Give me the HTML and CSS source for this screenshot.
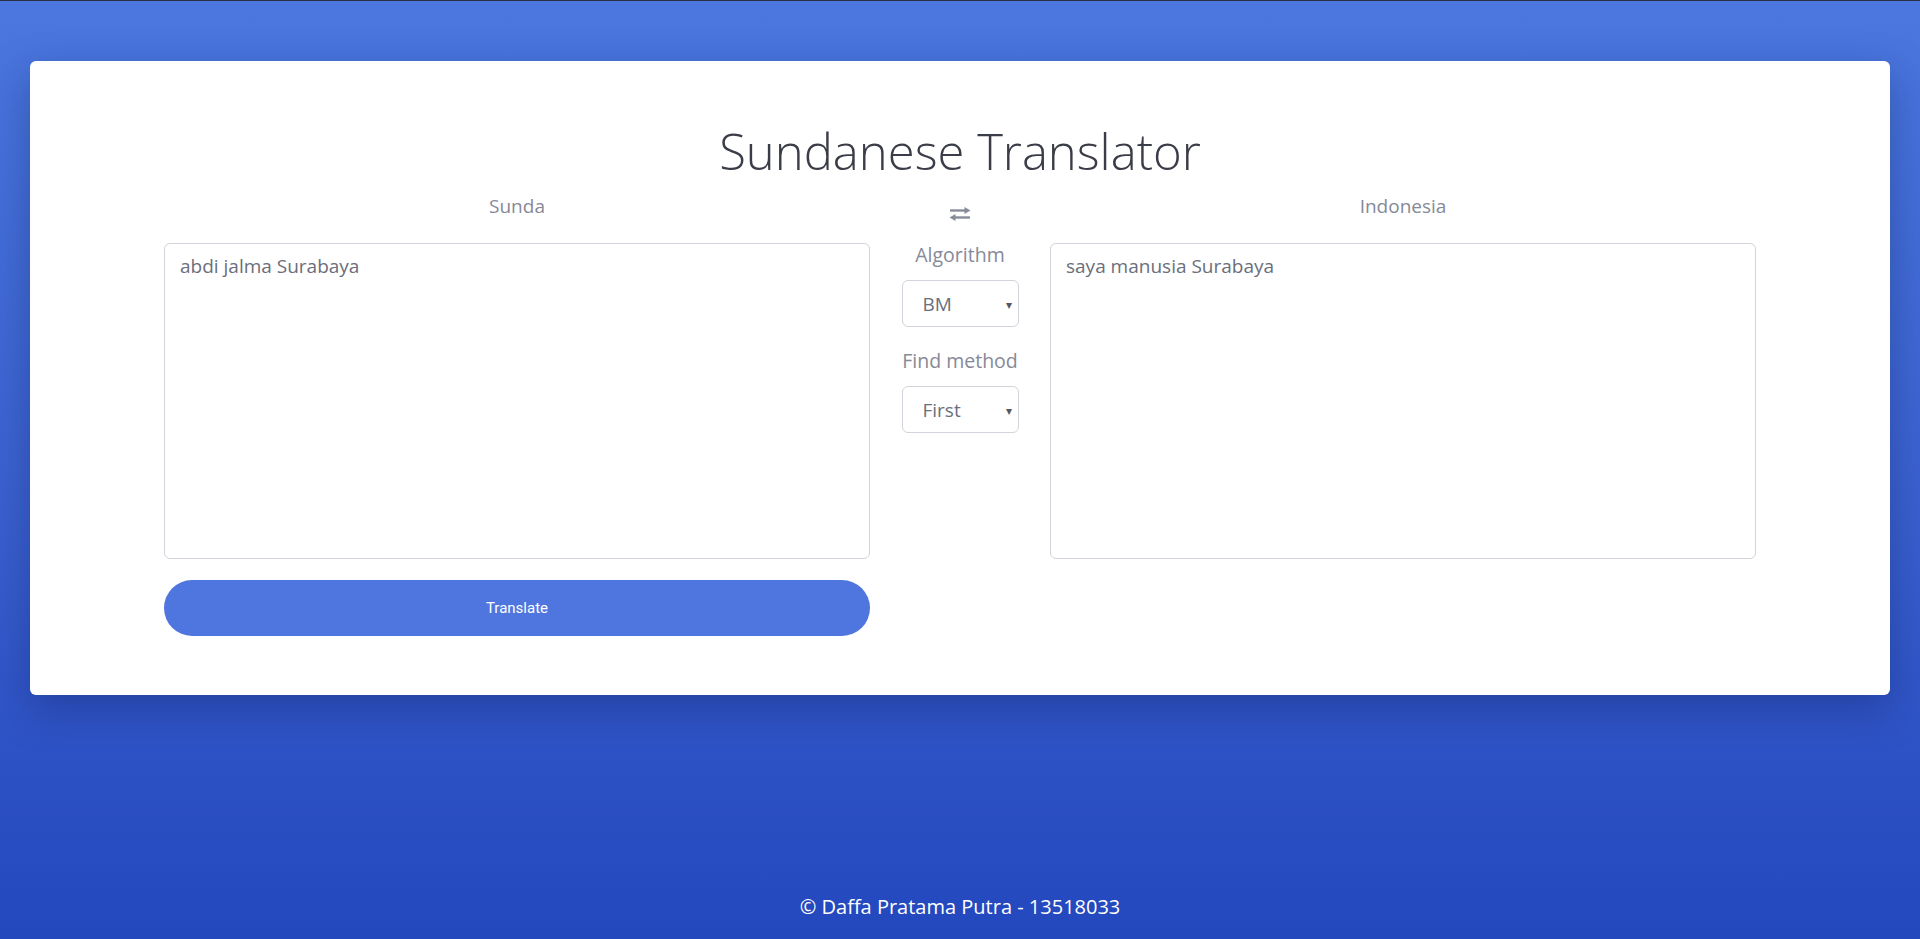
FILE: index.html
```html
<!DOCTYPE html>
<html lang="en">
<head>
<meta charset="utf-8">
<title>Sundanese Translator</title>
<link rel="stylesheet" href="styles.css">
</head>
<body>
  <div class="page">
    <main class="card">
      <h1 class="title">Sundanese Translator</h1>
      <div class="row">
        <section class="side">
          <div class="side-label">Sunda</div>
          <textarea class="box" spellcheck="true">abdi jalma Surabaya</textarea>
          <button class="translate-btn" type="button">Translate</button>
        </section>
        <section class="middle">
          <svg class="swap" width="22" height="14" viewBox="0 0 22 14" aria-hidden="true">
            <path d="M1 3.5 H17" stroke="#888b9a" stroke-width="2.4" fill="none"/>
            <path d="M15.5 0 L21.5 3.5 L15.5 7 Z" fill="#888b9a"/>
            <path d="M5 10.5 H21" stroke="#888b9a" stroke-width="2.4" fill="none"/>
            <path d="M6.5 7 L0.5 10.5 L6.5 14 Z" fill="#888b9a"/>
          </svg>
          <div class="mid-label">Algorithm</div>
          <div class="select-wrap">
            <select class="select">
              <option>BM</option>
              <option>KMP</option>
              <option>Regex</option>
            </select>
            <span class="caret">▾</span>
          </div>
          <div class="mid-label second">Find method</div>
          <div class="select-wrap">
            <select class="select">
              <option>First</option>
              <option>All</option>
            </select>
            <span class="caret">▾</span>
          </div>
        </section>
        <section class="side">
          <div class="side-label">Indonesia</div>
          <textarea class="box" readonly>saya manusia Surabaya</textarea>
        </section>
      </div>
    </main>
    <footer class="footer">© Daffa Pratama Putra - 13518033</footer>
  </div>
</body>
</html>
```
FILE: styles.css
```css
html, body {
  margin: 0;
  padding: 0;
}

body {
  font-family: "Open Sans", "Noto Sans", sans-serif;
  background: linear-gradient(180deg, #4b77de 0%, #3a60cf 55%, #2347bd 100%);
  min-height: 939px;
  border-top: 1px solid #2b3144;
  box-sizing: border-box;
}

.page {
  display: flex;
  flex-direction: column;
  min-height: 938px;
}

.card {
  margin: 60px 30px 0;
  height: 634px;
  box-sizing: border-box;
  background: #ffffff;
  border-radius: 6px;
  box-shadow: 0 14px 40px rgba(15, 30, 90, 0.35);
  padding-top: 62px;
}

.title {
  margin: 0;
  text-align: center;
  font-size: 49px;
  font-weight: 300;
  line-height: 57px;
  color: #3a3c47;
}

.row {
  display: grid;
  grid-template-columns: 706px 180px 706px;
  justify-content: center;
  margin-top: 13px;
}

.side {
  display: flex;
  flex-direction: column;
}

.side-label {
  text-align: center;
  font-size: 19px;
  line-height: 26px;
  color: #868997;
  margin-bottom: 24px;
}

.box {
  display: block;
  height: 316px;
  box-sizing: border-box;
  border: 1px solid #d3d3db;
  border-radius: 6px;
  padding: 9px 15px;
  font-family: "Open Sans", "Noto Sans", sans-serif;
  font-size: 19px;
  color: #6b6e7b;
  resize: none;
  outline: none;
  background: #fff;
}

.translate-btn {
  margin-top: 21px;
  height: 56px;
  border: none;
  border-radius: 28px;
  background: #4f76de;
  color: #ffffff;
  font-family: "Roboto", "Open Sans", sans-serif;
  font-size: 15px;
  font-weight: 400;
  cursor: pointer;
}

.middle {
  display: flex;
  flex-direction: column;
  align-items: center;
}

.swap {
  display: block;
  margin-top: 14px;
}

.mid-label {
  margin-top: 21px;
  font-size: 19.5px;
  line-height: 26px;
  color: #868997;
}

.mid-label.second {
  margin-top: 21px;
}

.select-wrap {
  position: relative;
  margin-top: 12px;
  width: 117px;
}

.select {
  display: block;
  width: 117px;
  height: 47px;
  box-sizing: border-box;
  appearance: none;
  -webkit-appearance: none;
  border: 1px solid #d3d3db;
  border-radius: 6px;
  background: #fff;
  padding: 0 0 0 20px;
  font-family: "Open Sans", "Noto Sans", sans-serif;
  font-size: 19px;
  color: #6b6e7b;
  outline: none;
}

.caret {
  position: absolute;
  right: 7px;
  top: 50%;
  transform: translateY(-50%);
  font-size: 12px;
  color: #555764;
  pointer-events: none;
}

.footer {
  margin-top: auto;
  padding-bottom: 19px;
  text-align: center;
  color: #ffffff;
  font-size: 20px;
  line-height: 26px;
}
```
